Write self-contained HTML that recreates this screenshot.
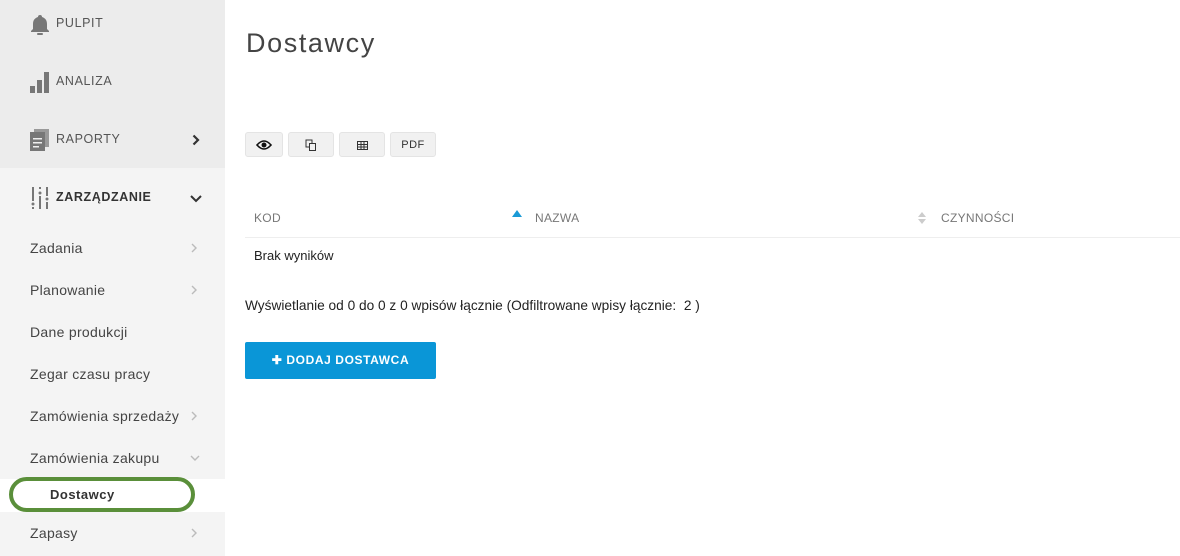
<!DOCTYPE html>
<html><head><meta charset="utf-8"><style>
*{margin:0;padding:0;box-sizing:border-box}
body{width:1180px;height:556px;background:#fff;font-family:"Liberation Sans",sans-serif;position:relative;overflow:hidden;color:#333}
.a{position:absolute}
#sb1{left:0;top:0;width:225px;height:168px;background:#ececec}
#sb2{left:0;top:168px;width:225px;height:388px;background:#f4f4f4}
.top{font-size:12.5px;letter-spacing:.6px;color:#555}
.sub{font-size:14px;color:#444;letter-spacing:.3px}
.btn{top:132px;height:25px;background:#f1f1f1;border:1px solid #e4e4e4;border-radius:3px;font-size:11px;text-align:center;line-height:25px;color:#333}
.th{top:211px;font-size:12px;color:#777;letter-spacing:.3px}
</style></head><body>
<div id="sb1" class="a"></div><div id="sb2" class="a"></div>
<svg class="a" style="left:30px;top:14px" width="20" height="22" viewBox="0 0 20 22"><path d="M10 1a2 2 0 0 1 2 2c3 1 5 3 5 7v5l2 2v1H1v-1l2-2v-5c0-4 2-6 5-7a2 2 0 0 1 2-2z" fill="#777"/><rect x="7" y="19" width="6" height="2" rx="1" fill="#777"/></svg>
<div class="a top" style="left:56px;top:16px">PULPIT</div>
<svg class="a" style="left:30px;top:72px" width="20" height="21"><rect x="0" y="14" width="5" height="7" fill="#777"/><rect x="7" y="8" width="5" height="13" fill="#777"/><rect x="14" y="0" width="5" height="21" fill="#777"/></svg>
<div class="a top" style="left:56px;top:74px">ANALIZA</div>
<svg class="a" style="left:30px;top:129px" width="20" height="22"><rect x="4" y="0" width="15" height="18" fill="#999"/><rect x="0" y="3" width="15" height="19" fill="#777"/><rect x="3" y="9" width="9" height="1.5" fill="#eee"/><rect x="3" y="13" width="9" height="1.5" fill="#eee"/><rect x="3" y="17" width="6" height="1.5" fill="#eee"/></svg>
<div class="a top" style="left:56px;top:132px">RAPORTY</div>
<svg class="a" style="left:192px;top:134px" width="8" height="12"><path d="M1.5 1.5l4.5 4.5-4.5 4.5" stroke="#333" stroke-width="2.2" fill="none"/></svg>
<svg class="a" style="left:31px;top:187px" width="18" height="22"><g fill="#777"><rect x="1" y="0" width="2" height="14"/><circle cx="2" cy="17" r="1.5"/><rect x="1" y="20" width="2" height="2"/><rect x="8" y="0" width="2" height="2"/><circle cx="9" cy="6" r="1.5"/><rect x="8" y="9" width="2" height="13"/><rect x="15" y="0" width="2" height="9"/><circle cx="16" cy="12" r="1.5"/><rect x="15" y="15" width="2" height="7"/></g></svg>
<div class="a top" style="left:56px;top:190px;font-weight:bold;color:#333">ZARZĄDZANIE</div>
<svg class="a" style="left:190px;top:195px" width="12" height="8"><path d="M1 1l5 5 5-5" stroke="#333" stroke-width="2" fill="none"/></svg>
<div class="a sub" style="left:30px;top:240px">Zadania</div>
<div class="a sub" style="left:30px;top:282px">Planowanie</div>
<div class="a sub" style="left:30px;top:324px">Dane produkcji</div>
<div class="a sub" style="left:30px;top:366px">Zegar czasu pracy</div>
<div class="a sub" style="left:30px;top:408px">Zamówienia sprzedaży</div>
<div class="a sub" style="left:30px;top:450px">Zamówienia zakupu</div>
<svg class="a" style="left:191px;top:243px" width="6" height="10"><path d="M1 1l4 4-4 4" stroke="#bbb" stroke-width="1.4" fill="none"/></svg>
<svg class="a" style="left:191px;top:285px" width="6" height="10"><path d="M1 1l4 4-4 4" stroke="#bbb" stroke-width="1.4" fill="none"/></svg>
<svg class="a" style="left:191px;top:411px" width="6" height="10"><path d="M1 1l4 4-4 4" stroke="#bbb" stroke-width="1.4" fill="none"/></svg>
<svg class="a" style="left:191px;top:528px" width="6" height="10"><path d="M1 1l4 4-4 4" stroke="#bbb" stroke-width="1.4" fill="none"/></svg>
<svg class="a" style="left:190px;top:455px" width="10" height="6"><path d="M1 1l4 4 4-4" stroke="#bbb" stroke-width="1.4" fill="none"/></svg>
<div class="a" style="left:0;top:479px;width:225px;height:33px;background:#fff"></div>
<div class="a" style="left:9px;top:477px;width:186px;height:35px;border:4px solid #5a8f3a;border-radius:18px"></div>
<div class="a" style="left:50px;top:487px;font-size:13px;font-weight:bold;color:#333;letter-spacing:.5px">Dostawcy</div>
<div class="a sub" style="left:30px;top:525px">Zapasy</div>

<div class="a" style="left:246px;top:28px;font-size:27px;color:#444;letter-spacing:1.6px">Dostawcy</div>
<div class="a btn" style="left:245px;width:38px"><svg width="16" height="10" style="margin-top:7px;display:inline-block" viewBox="0 0 16 10"><path d="M1 5q7-8 14 0q-7 8-14 0z" fill="none" stroke="#111" stroke-width="1.6"/><circle cx="8" cy="5" r="2.5" fill="#111"/></svg></div>
<div class="a btn" style="left:288px;width:46px"><svg width="12" height="12" style="margin-top:6px;display:inline-block"><rect x="1" y="1" width="6" height="7" fill="none" stroke="#333"/><rect x="4.5" y="4.5" width="6" height="7" fill="#f1f1f1" stroke="#333"/></svg></div>
<div class="a btn" style="left:339px;width:46px"><svg width="11" height="9" style="margin-top:8px;display:inline-block"><rect x=".5" y=".5" width="10" height="8" fill="none" stroke="#333"/><path d="M.5 3.5h10M.5 6h10M4 .5v8M7 .5v8" stroke="#333"/></svg></div>
<div class="a btn" style="left:390px;width:46px;letter-spacing:.5px">PDF</div>

<div class="a th" style="left:254px">KOD</div>
<div class="a" style="left:512px;top:210px;width:0;height:0;border-left:5px solid transparent;border-right:5px solid transparent;border-bottom:7px solid #1a9ad6"></div>
<div class="a th" style="left:535px">NAZWA</div>
<div class="a" style="left:918px;top:212px;border-left:4px solid transparent;border-right:4px solid transparent;border-bottom:5px solid #ccc"></div>
<div class="a" style="left:918px;top:219px;border-left:4px solid transparent;border-right:4px solid transparent;border-top:5px solid #ccc"></div>
<div class="a th" style="left:941px">CZYNNOŚCI</div>
<div class="a" style="left:245px;top:237px;width:935px;height:1px;background:#eee"></div>
<div class="a" style="left:254px;top:248px;font-size:13px;color:#222">Brak wyników</div>
<div class="a" style="left:245px;top:298px;font-size:13.7px;color:#222">Wyświetlanie od 0 do 0 z 0 wpisów łącznie (Odfiltrowane wpisy łącznie: &nbsp;2 )</div>
<div class="a" style="left:245px;top:342px;width:191px;height:37px;background:#0a96d7;border-radius:2px;color:#fff;font-size:12px;font-weight:bold;letter-spacing:.6px;text-align:center;line-height:37px">✚ DODAJ DOSTAWCA</div>
</body></html>
